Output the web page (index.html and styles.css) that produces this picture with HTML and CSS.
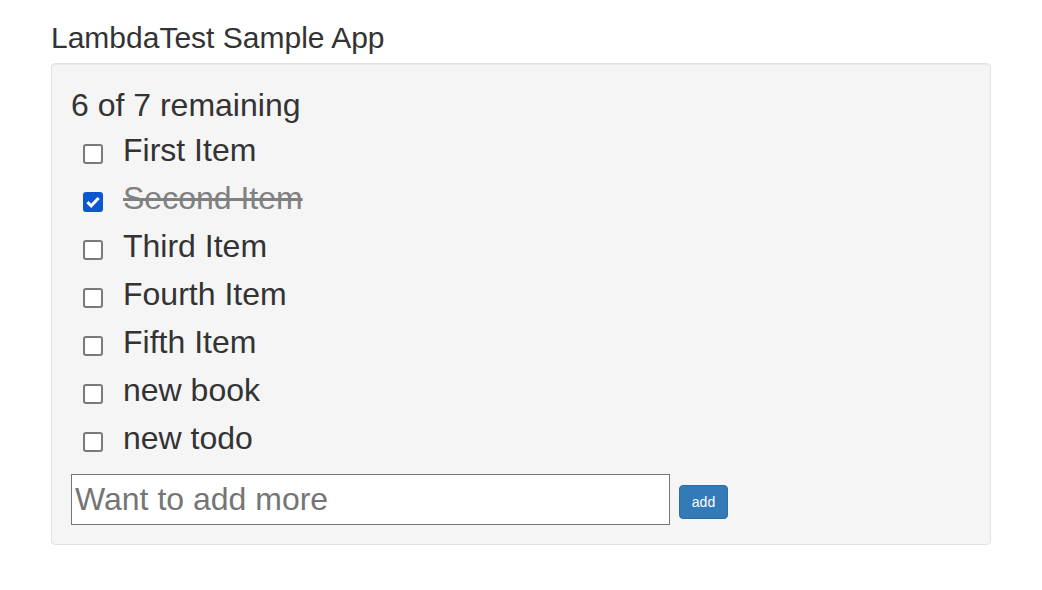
FILE: index.html
```html
<!DOCTYPE html>
<html>
<head>
<meta charset="utf-8">
<link rel="stylesheet" href="styles.css">
</head>
<body>
<div class="container">
  <h2 class="title">LambdaTest Sample App</h2>
  <div class="well">
    <div class="remaining">6 of 7 remaining</div>
    <ul class="todo-list">
      <li class="todo"><input type="checkbox" class="todo-check"><span class="done-false">First Item</span></li>
      <li class="todo"><input type="checkbox" class="todo-check" checked><span class="done-true">Second Item</span></li>
      <li class="todo"><input type="checkbox" class="todo-check"><span class="done-false">Third Item</span></li>
      <li class="todo"><input type="checkbox" class="todo-check"><span class="done-false">Fourth Item</span></li>
      <li class="todo"><input type="checkbox" class="todo-check"><span class="done-false">Fifth Item</span></li>
      <li class="todo"><input type="checkbox" class="todo-check"><span class="done-false">new book</span></li>
      <li class="todo"><input type="checkbox" class="todo-check"><span class="done-false">new todo</span></li>
    </ul>
    <form class="add-form">
      <input type="text" class="todo-text" placeholder="Want to add more">
      <input type="submit" class="btn-primary" value="add">
    </form>
  </div>
</div>
</body>
</html>
```

FILE: styles.css
```css
html, body {
  margin: 0;
  padding: 0;
  background: #fff;
}
body {
  font-family: "Liberation Sans", Arial, Helvetica, sans-serif;
  font-size: 32px;
  line-height: 1.42857143;
  color: #333;
}
.container {
  width: 940px;
  margin: 0 auto;
  padding: 0 15px;
}
.title {
  margin: 0;
  padding-top: 21px;
  font-size: 30px;
  font-weight: 500;
  line-height: 33px;
  height: 42px;
}
.well {
  background: #f5f5f5;
  border: 1px solid #e3e3e3;
  border-radius: 4px;
  box-shadow: inset 0 1px 1px rgba(0,0,0,.05);
  padding: 19px;
}
.remaining {
  height: 45px;
  line-height: 45.714px;
}
.todo-list {
  list-style: none;
  margin: 0 0 10px;
  padding: 0;
}
.todo {
  display: flex;
  align-items: flex-start;
  height: 48px;
}
.todo-check {
  appearance: none;
  -webkit-appearance: none;
  box-sizing: border-box;
  width: 20px;
  height: 20px;
  margin: 16px 20px 0 12px;
  flex: none;
  border: 2px solid #7a7a7a;
  border-radius: 3px;
  background: #fff;
}
.todo-check:checked {
  border: none;
  background: #0b57d0 url("data:image/svg+xml;utf8,<svg xmlns='http://www.w3.org/2000/svg' viewBox='0 0 20 20'><path d='M4.4 10.2 L8.2 13.8 L15.6 6' fill='none' stroke='white' stroke-width='3'/></svg>") center / 20px 20px no-repeat;
}
.done-true {
  text-decoration: line-through;
  color: grey;
}
.add-form {
  display: flex;
  align-items: flex-start;
  gap: 9px;
  margin: 0;
}
.todo-text {
  box-sizing: border-box;
  width: 599px;
  height: 51px;
  margin: 0;
  padding: 1px 3px;
  font: inherit;
  font-size: 32px;
  color: #333;
  border: 1px solid #767676;
  background: #fff;
}
.todo-text::placeholder {
  color: #757575;
}
.btn-primary {
  box-sizing: border-box;
  margin: 11px 0 0;
  width: 49px;
  height: 34px;
  padding: 0;
  font-family: "Liberation Sans", Arial, sans-serif;
  font-size: 14px;
  color: #fff;
  background: #337ab7;
  border: 1px solid #2e6da4;
  border-radius: 4px;
}
```
